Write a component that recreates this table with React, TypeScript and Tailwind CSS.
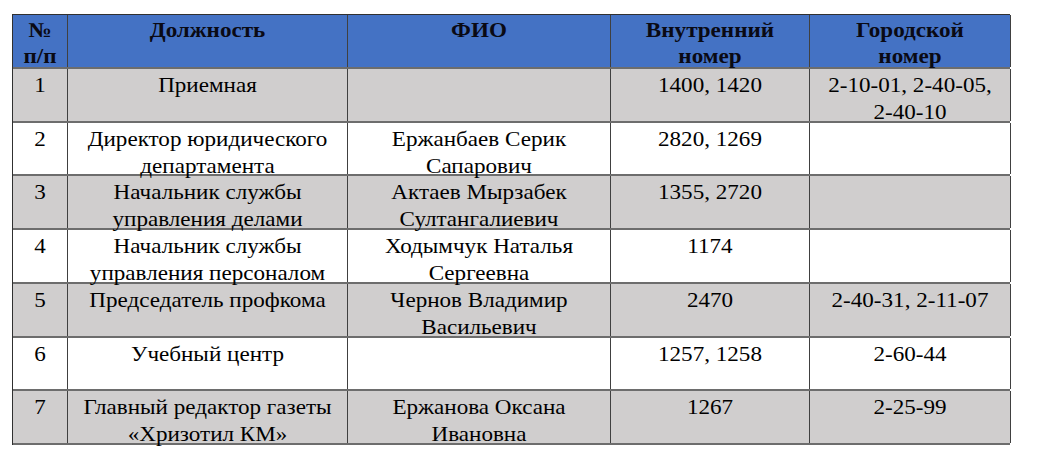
import React from "react";

const serif: React.CSSProperties = { fontFamily: "'Liberation Serif'" };

const widths = ["w-[55px]", "w-[280px]", "w-[263px]", "w-[199px]", "w-[201px]"];

const rows: string[][][] = [
  [["1"], ["Приемная"], [""], ["1400, 1420"], ["2-10-01, 2-40-05,", "2-40-10"]],
  [["2"], ["Директор юридического", "департамента"], ["Ержанбаев Серик", "Сапарович"], ["2820, 1269"], [""]],
  [["3"], ["Начальник службы", "управления делами"], ["Актаев Мырзабек", "Султангалиевич"], ["1355, 2720"], [""]],
  [["4"], ["Начальник службы", "управления персоналом"], ["Ходымчук Наталья", "Сергеевна"], ["1174"], [""]],
  [["5"], ["Председатель профкома"], ["Чернов Владимир", "Васильевич"], ["2470"], ["2-40-31, 2-11-07"]],
  [["6"], ["Учебный центр"], [""], ["1257, 1258"], ["2-60-44"]],
  [["7"], ["Главный редактор газеты", "«Хризотил КМ»"], ["Ержанова Оксана", "Ивановна"], ["1267"], ["2-25-99"]],
];

const headers: string[][] = [["№", "п/п"], ["Должность"], ["ФИО"], ["Внутренний", "номер"], ["Городской", "номер"]];

export default function App() {
  return (
    <div className="w-[1041px] h-[457px] bg-white pt-[14px] pl-[12px] font-['Liberation_Serif']">
      <div className="w-[998px] border-l border-t border-[#303030] flex flex-col">
        <div className="flex h-[53.75px] bg-[#4472C4] border-b-2 border-[#6d6d6d]">
          {headers.map((h, i) => (
            <div key={i} className={`${widths[i]} shrink-0 border-r border-[#404040] pt-[2px]`}>
              <div className="scale-x-[1.1] origin-center">
                {h.map((l, k) => (
                  <div
                    key={k}
                    style={serif}
                    className="font-['Liberation_Serif'] font-bold text-[21px] leading-[26px] text-center text-[#0a0a14] whitespace-nowrap"
                  >
                    {l}
                  </div>
                ))}
              </div>
            </div>
          ))}
        </div>
        {rows.map((r, ri) => (
          <div
            key={ri}
            className={`flex h-[53.75px] border-b-2 border-[#6d6d6d] ${ri % 2 === 0 ? "bg-[#D0CECE]" : "bg-white"}`}
          >
            {r.map((c, ci) => (
              <div key={ci} className={`${widths[ci]} shrink-0 border-r border-[#404040] pt-[3px]`}>
                <div className="scale-x-[1.1] origin-center">
                  {c.map((l, k) => (
                    <div
                      key={k}
                      style={serif}
                      className="font-['Liberation_Serif'] text-[21px] leading-[27px] text-center text-black whitespace-nowrap"
                    >
                      {l || "\u00a0"}
                    </div>
                  ))}
                </div>
              </div>
            ))}
          </div>
        ))}
      </div>
    </div>
  );
}
